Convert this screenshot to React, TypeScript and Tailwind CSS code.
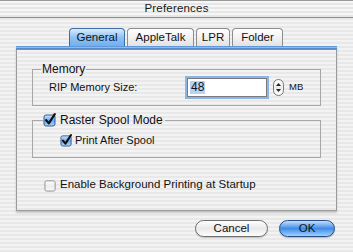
import React from "react";

const stripes =
  "bg-[repeating-linear-gradient(180deg,#f3f3f3_0px,#f3f3f3_2px,#e8e8e8_2px,#e8e8e8_4px)]";

const tabs = [
  { label: "General", w: "w-[56px]", active: true },
  { label: "AppleTalk", w: "w-[67px]", active: false },
  { label: "LPR", w: "w-[34px]", active: false },
  { label: "Folder", w: "w-[51px]", active: false },
];

const CheckBox = ({ checked, size = 12 }: { checked: boolean; size?: number }) => (
  <svg width={size + 2} height={size + 2} viewBox="0 0 14 14" className="shrink-0">
    <defs>
      <linearGradient id="cbBlue" x1="0" y1="0" x2="0" y2="1">
        <stop offset="0" stopColor="#cfe4fb" />
        <stop offset="0.5" stopColor="#6aaaf0" />
        <stop offset="1" stopColor="#a9d3fb" />
      </linearGradient>
      <linearGradient id="cbWhite" x1="0" y1="0" x2="0" y2="1">
        <stop offset="0" stopColor="#ffffff" />
        <stop offset="0.5" stopColor="#ececec" />
        <stop offset="1" stopColor="#fafafa" />
      </linearGradient>
    </defs>
    <rect
      x="1"
      y="2"
      width="11"
      height="11"
      rx="2"
      fill={checked ? "url(#cbBlue)" : "url(#cbWhite)"}
      stroke={checked ? "#3b5f8c" : "#8a8a8a"}
      strokeWidth="1"
    />
    {checked && (
      <path d="M3.2 7.2 L5.8 10.4 L11.8 1.2" fill="none" stroke="#111" strokeWidth="2.2" strokeLinecap="round" strokeLinejoin="round" />
    )}
  </svg>
);

const Stepper = () => (
  <div className="w-[11px] h-[17px] rounded-full border border-[#777] bg-gradient-to-b from-white via-[#ececec] to-white flex flex-col items-center justify-between py-[3px]">
    <svg width="5" height="3" viewBox="0 0 5 3">
      <path d="M2.5 0 L5 3 L0 3 Z" fill="#222" />
    </svg>
    <svg width="5" height="3" viewBox="0 0 5 3">
      <path d="M0 0 L5 0 L2.5 3 Z" fill="#222" />
    </svg>
  </div>
);

export default function App() {
  return (
    <div
      className={`w-[353px] h-[252px] overflow-hidden text-[11px] text-[#111] ${stripes}`}
      style={{ fontFamily: '"Liberation Sans", Arial, sans-serif' }}
    >
      {/* Title bar */}
      <div className="h-[18px] border-t border-[#9a9a9a] border-b border-b-[#8c8c8c] flex items-center justify-center bg-[repeating-linear-gradient(180deg,#f6f6f6_0px,#f6f6f6_2px,#e6e6e6_2px,#e6e6e6_4px)]">
        <span className="text-[11.5px] text-[#1a1a1a] tracking-[0.2px]">Preferences</span>
      </div>

      {/* Tabs */}
      <div className="mt-[10px] pl-[69px] flex gap-[2px] h-[18px]">
        {tabs.map((t) =>
          t.active ? (
            <div
              key={t.label}
              className={`${t.w} h-[18px] rounded-t-[4px] border border-b-0 border-[#3d6ea8] bg-gradient-to-b from-[#d9ebfc] via-[#8fc1f3] to-[#6fb0f0] flex items-center justify-center text-[11.5px]`}
            >
              {t.label}
            </div>
          ) : (
            <div
              key={t.label}
              className={`${t.w} h-[18px] rounded-t-[4px] border border-b-0 border-[#8d8d8d] bg-gradient-to-b from-white via-[#f2f2f2] to-[#e2e2e2] flex items-center justify-center text-[11.5px]`}
            >
              {t.label}
            </div>
          )
        )}
      </div>

      {/* Panel */}
      <div className="mx-[16px] w-[321px] h-[165px] border border-[#9c9c9c] border-t-0 shadow-[0_2px_2px_rgba(0,0,0,0.18)] flex flex-col">
        <div className="h-[4px] -mx-[1px] bg-gradient-to-b from-[#4b86cf] via-[#8bbcf0] to-[#3d72b8] border-b border-[#7b8fa8]" />

        <div className={`flex-1 px-[15px] ${stripes}`}>
          {/* Memory */}
          <fieldset className="mt-[12px] border border-[#a7a7a7] px-[16px] pb-[8px]">
            <legend className="ml-[-8px] px-[1px] h-[14px] leading-[14px] text-[12px]">Memory</legend>
            <div className="mt-[2px] h-[19px] flex items-center">
              <span className="w-[138px]">RIP Memory Size:</span>
              <div className="w-[80px] h-[19px] border border-[#7b7b7b] bg-white ring-2 ring-[#8db4e6] flex items-center pl-[2px]">
                <span className="bg-[#b6d3f5] leading-[13px] text-[12px] px-[1px]">48</span>
              </div>
              <div className="ml-[6px]">
                <Stepper />
              </div>
              <span className="ml-[5px] text-[9.5px]">MB</span>
            </div>
          </fieldset>

          {/* Raster Spool Mode */}
          <fieldset className="mt-[7px] border border-[#a7a7a7] pb-[10px]">
            <legend className="ml-[10px] pr-[2px] h-[14px] flex items-center gap-[3px] text-[12px]">
              <CheckBox checked size={12} />
              <span>Raster Spool Mode</span>
            </legend>
            <div className="mt-[6px] ml-[27px] h-[14px] flex items-center gap-[2px]">
              <CheckBox checked size={11} />
              <span>Print After Spool</span>
            </div>
          </fieldset>

          {/* Background printing */}
          <div className="mt-[20px] ml-[12px] h-[14px] flex items-center gap-[3px] text-[11.5px]">
            <CheckBox checked={false} size={11} />
            <span>Enable Background Printing at Startup</span>
          </div>
        </div>
      </div>

      {/* Buttons */}
      <div className="mt-[9px] pr-[18px] flex justify-end gap-[11px]">
        <div className="w-[73px] h-[17px] rounded-full border border-[#6d6d6d] bg-gradient-to-b from-white via-[#e9e9e9] to-[#fdfdfd] shadow-[0_1px_1px_rgba(0,0,0,0.2)] flex items-center justify-center text-[11.5px]">
          Cancel
        </div>
        <div className="w-[56px] h-[17px] rounded-full border border-[#244f8a] bg-gradient-to-b from-[#c4def8] via-[#3e8ce6] to-[#9fd0fb] shadow-[0_1px_1px_rgba(0,0,0,0.25)] flex items-center justify-center text-[11.5px]">
          OK
        </div>
      </div>
    </div>
  );
}
